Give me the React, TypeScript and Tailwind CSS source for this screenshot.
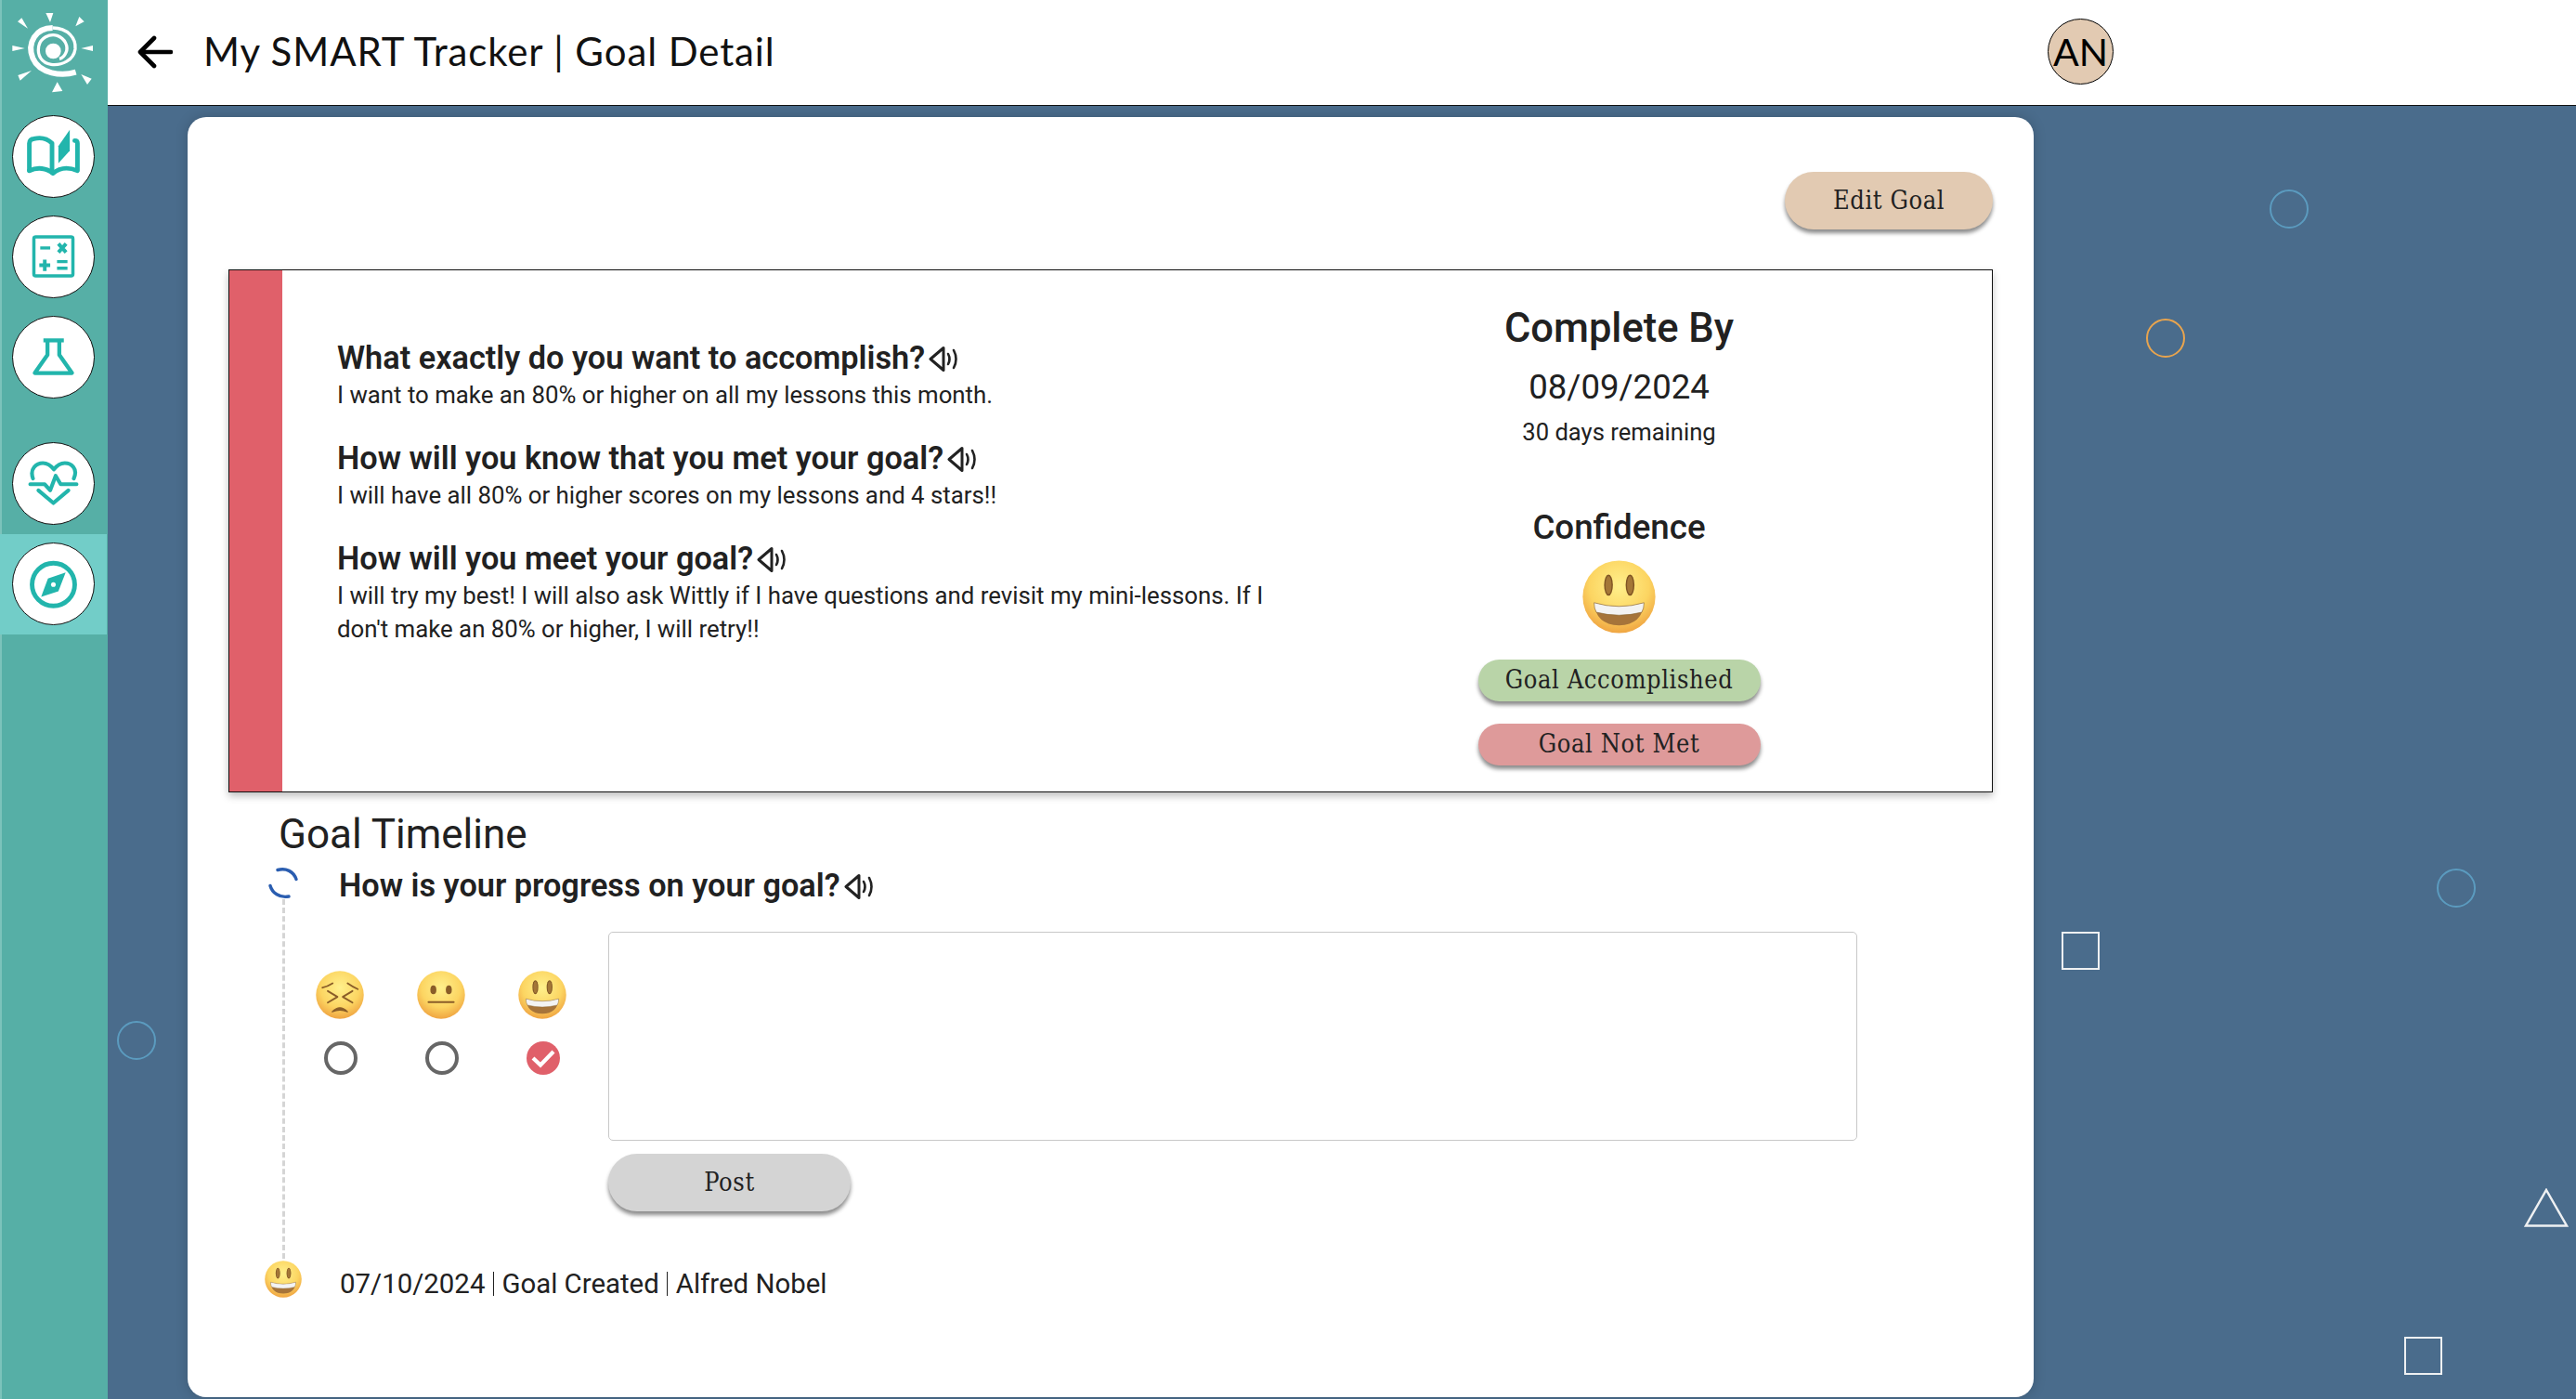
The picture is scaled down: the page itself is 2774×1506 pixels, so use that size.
import type { ReactNode } from 'react'

const teal = '#22b5ac'

function Logo() {
  return (
    <svg viewBox="0 0 348 339" className="h-[113px] w-[116px]">
      <g fill="#fff">
        <polygon points="148,42 172,42 162,72" />
        <polygon points="256,54 272,70 244,85" />
        <polygon points="300,147 300,165 262,156" />
        <polygon points="262,240 296,254 282,273" />
        <polygon points="185,265 168,298 202,294" />
        <polygon points="102,228 58,243 65,260" />
        <polygon points="40,147 40,165 80,156" />
        <polygon points="90,92 57,70 70,58" />
        <circle cx="172" cy="165" r="25" />
      </g>
      <path d="M245 233 C 200 246 128 240 106 188 C 86 138 116 90 170 90" fill="none" stroke="#fff" strokeWidth="18" />
      <path d="M170 90 C 220 90 246 125 243 158 C 238 195 200 212 165 208 C 135 204 120 180 125 150 C 130 122 160 108 185 115 C 210 124 222 150 213 170 C 208 182 200 188 192 190" fill="none" stroke="#fff" strokeWidth="10" />
    </svg>
  )
}

function BookIcon() {
  return (
    <svg viewBox="0 0 89 89" className="h-full w-full" fill="none" stroke={teal} strokeWidth="5" strokeLinejoin="round" strokeLinecap="round">
      <path d="M18 60 V30 C18 27 20 25 23 25 C31 23 38 25 43 30 V62" />
      <path d="M18 60 C27 56 37 57 44 63 C51 57 61 56 71 60 V30 C71 28 70 27 68 27" />
      <polygon points="50,33 62.5,15 62.5,38 50,52" fill={teal} stroke="none" />
    </svg>
  )
}

function CalcIcon() {
  return (
    <svg viewBox="0 0 89 89" className="h-full w-full" fill="none" stroke={teal} strokeWidth="3.4">
      <rect x="23" y="22.5" width="43" height="43" rx="2" strokeWidth="3.6" />
      <path d="M30 34.7 H41" />
      <path d="M50 30 L58.5 39.5 M58.5 30 L50 39.5" strokeWidth="4" />
      <path d="M29 53.7 H41 M35 47.5 V60" strokeWidth="4" />
      <path d="M48.5 49.7 H60 M48.5 57 H60" />
    </svg>
  )
}

function FlaskIcon() {
  return (
    <svg viewBox="0 0 89 89" className="h-full w-full" fill="none" stroke={teal} strokeWidth="4.4" strokeLinejoin="round">
      <path d="M33.5 26 H56" />
      <path d="M38 26 V42 L24 62 H65 L51 42 V26" />
    </svg>
  )
}

function HeartIcon() {
  return (
    <svg viewBox="0 0 89 89" className="h-full w-full" fill="none" stroke={teal} strokeWidth="4.2" strokeLinecap="round" strokeLinejoin="round">
      <path d="M22 39 C18 28 26 22 33 22 C38 22 42 25 45 29 C48 25 52 22 57 22 C64 22 72 28 67 39" />
      <path d="M19 45.3 H35 L41 52 L47 36 L52.5 45.3 H70" />
      <path d="M28 52 L44.5 66 L61 52" />
    </svg>
  )
}

function CompassIcon() {
  return (
    <svg viewBox="0 0 89 89" className="h-full w-full" fill="none">
      <circle cx="44.5" cy="45.3" r="23.5" stroke={teal} strokeWidth="5" />
      <polygon points="58,32 50,52.7 31,58.7 38.5,38.7" fill={teal} />
      <circle cx="44.5" cy="45.3" r="2.6" fill="#fff" />
    </svg>
  )
}

function NavButton({ children, active, className = '' }: { children: ReactNode; active?: boolean; className?: string }) {
  return (
    <div className={`flex h-[108px] w-[115px] items-center justify-center ${active ? 'bg-[#72cdc8]' : ''} ${className}`}>
      <div className="h-[89px] w-[89px] rounded-full border-[1.5px] border-[#111] bg-white">{children}</div>
    </div>
  )
}

function Speaker() {
  return (
    <svg viewBox="0 0 33 29" className="ml-[4px] h-[29px] w-[33px] shrink-0" fill="none" stroke="#222" strokeLinejoin="round" strokeLinecap="round">
      <path d="M2 14.5 L16 2.5 V26.5 Z" strokeWidth="3" />
      <path d="M21 9 Q24 14.5 21 20" strokeWidth="2.6" />
      <path d="M27 5 Q32 14.5 27 24" strokeWidth="2.6" />
    </svg>
  )
}

function FaceDefs({ id }: { id: string }) {
  return (
    <defs>
      <radialGradient id={id} cx="50%" cy="35%" r="68%">
        <stop offset="0%" stopColor="#fff08c" />
        <stop offset="60%" stopColor="#fcd562" />
        <stop offset="100%" stopColor="#ee9f3e" />
      </radialGradient>
    </defs>
  )
}

function SmileFace({ id, className }: { id: string; className: string }) {
  return (
    <svg viewBox="0 0 100 100" className={className}>
      <FaceDefs id={id} />
      <circle cx="50" cy="50" r="49.5" fill={`url(#${id})`} />
      <ellipse cx="35.6" cy="34" rx="6" ry="14.5" fill="#7f5423" />
      <ellipse cx="35.6" cy="34" rx="4.2" ry="12.5" fill="#a47637" />
      <ellipse cx="65" cy="34" rx="6" ry="14.5" fill="#7f5423" />
      <ellipse cx="65" cy="34" rx="4.2" ry="12.5" fill="#a47637" />
      <path d="M16 58 Q50 68 84 58 Q82 88 50 89 Q18 88 16 58 Z" fill="#a6743a" />
      <path d="M16 58 Q50 68 84 58 Q84 66 81 71 Q50 79 19 71 Q16 66 16 58 Z" fill="#f3f3f3" stroke="#8d6a3a" strokeWidth="0.8" />
    </svg>
  )
}

function NeutralFace({ id, className }: { id: string; className: string }) {
  return (
    <svg viewBox="0 0 100 100" className={className}>
      <FaceDefs id={id} />
      <circle cx="50" cy="50" r="49.5" fill={`url(#${id})`} />
      <ellipse cx="34" cy="39.5" rx="6.2" ry="9" fill="#8a5d28" />
      <ellipse cx="66" cy="39.5" rx="6.2" ry="9" fill="#8a5d28" />
      <path d="M24 65 H76" stroke="#8a5d28" strokeWidth="4" strokeLinecap="round" />
    </svg>
  )
}

function StrainFace({ id, className }: { id: string; className: string }) {
  return (
    <svg viewBox="0 0 100 100" className={className}>
      <FaceDefs id={id} />
      <circle cx="50" cy="50" r="49.5" fill={`url(#${id})`} />
      <g fill="none" stroke="#8a5d28" strokeWidth="3.6" strokeLinecap="round" strokeLinejoin="round">
        <path d="M14 35 Q24 33 35 26" />
        <path d="M66 26 Q76 33 87 38" />
        <path d="M25 42 L45 54 L25 66" />
        <path d="M76 42 L56 54 L76 66" />
      </g>
      <path d="M34 85 Q50 68 66 85 Q50 78 34 85 Z" fill="#8a5d28" stroke="#8a5d28" strokeWidth="2" strokeLinejoin="round" />
    </svg>
  )
}

function Question({ title, lines }: { title: string; lines: string[] }) {
  return (
    <div className="mb-[31px]">
      <div className="flex h-[40px] items-center whitespace-nowrap text-[34.3px] font-semibold text-[#212121]">
        {title}
        <Speaker />
      </div>
      <div className="mt-px whitespace-nowrap text-[25.8px] leading-[36px] text-[#212121]">
        {lines.map((line) => (
          <div key={line}>{line}</div>
        ))}
      </div>
    </div>
  )
}

const buttonFont = "font-['DejaVu_Serif_Condensed','DejaVu_Serif',serif]"

export default function App() {
  return (
    <div className="relative flex h-screen w-screen overflow-hidden bg-[#4a6c8c] font-['Roboto',sans-serif]">
      {/* Sidebar */}
      <aside className="h-full w-[116px] shrink-0 border-l-2 border-[#7cc3bb] bg-[#56afa6]">
        <div className="-ml-[2px]">
          <Logo />
        </div>
        <div className="-ml-[2px] mt-[1.5px]">
          <NavButton><BookIcon /></NavButton>
          <NavButton><CalcIcon /></NavButton>
          <NavButton><FlaskIcon /></NavButton>
          <NavButton className="mt-[28px]"><HeartIcon /></NavButton>
          <NavButton active><CompassIcon /></NavButton>
        </div>
      </aside>

      <div className="flex min-w-0 flex-1 flex-col">
        {/* Top bar */}
        <header className="flex h-[114px] shrink-0 items-center justify-between border-b border-[#111] bg-white pb-[2px] pl-[32px] pr-[498px]">
          <div className="flex items-center gap-[33px]">
            <svg viewBox="0 0 38 36" className="h-[36px] w-[38px]" fill="none" stroke="#000" strokeWidth="4.6" strokeLinecap="round" strokeLinejoin="round">
              <path d="M36 18 H4" />
              <path d="M18 3 L3 18 L18 33" />
            </svg>
            <h1 className="font-['Lato',sans-serif] text-[42px] font-normal tracking-[0.9px] text-[#111]">My SMART Tracker | Goal Detail</h1>
          </div>
          <div className="flex h-[71px] w-[71px] items-center justify-center rounded-full border border-black bg-[#e2cab2] font-['Lato',sans-serif] text-[41px] text-black">
            AN
          </div>
        </header>

        {/* Main */}
        <main className="flex-1 pl-[86px] pt-[12px]">
          <div className="h-[1378px] w-[1988px] rounded-[20px] bg-white px-[44px] pt-[59px] shadow-[0_0_14px_rgba(0,0,0,0.18)]">
            <div className="flex justify-end">
              <button className={`h-[62px] w-[224px] rounded-full bg-[#e2cab2] text-[27px] tracking-[0.6px] text-[#222] shadow-[0_4px_4px_rgba(0,0,0,0.45)] ${buttonFont}`}>
                Edit Goal
              </button>
            </div>

            {/* Goal summary */}
            <section className="mt-[43px] flex h-[563px] border border-[#111] shadow-[0_4px_8px_rgba(0,0,0,0.25)]">
              <div className="w-[57px] shrink-0 bg-[#e0606a]" />
              <div className="w-[1090px] shrink-0 pl-[59px] pt-[75px]">
                <Question title="What exactly do you want to accomplish?" lines={['I want to make an 80% or higher on all my lessons this month.']} />
                <Question title="How will you know that you met your goal?" lines={['I will have all 80% or higher scores on my lessons and 4 stars!!']} />
                <Question
                  title="How will you meet your goal?"
                  lines={[
                    'I will try my best! I will also ask Wittly if I have questions and revisit my mini-lessons. If I',
                    "don't make an 80% or higher, I will retry!!",
                  ]}
                />
              </div>
              <div className="flex flex-1 flex-col items-center pr-[52px] pt-[39px] text-[#212121]">
                <div className="whitespace-nowrap text-[43.5px] font-medium leading-[48px]">Complete By</div>
                <div className="mt-[17px] text-[36.6px] leading-[44px]">08/09/2024</div>
                <div className="mt-[10px] whitespace-nowrap text-[25.6px] leading-[32px]">30 days remaining</div>
                <div className="mt-[65px] text-[36.7px] font-medium leading-[44px]">Confidence</div>
                <SmileFace id="confidence-face" className="mt-[13px] h-[79px] w-[79px] shrink-0" />
                <button className={`mt-[28px] h-[45px] w-[304px] shrink-0 rounded-full bg-[#b9d4a8] text-[27px] tracking-[0.6px] text-[#222] shadow-[0_4px_4px_rgba(0,0,0,0.45)] ${buttonFont}`}>
                  Goal Accomplished
                </button>
                <button className={`mt-[24px] h-[45px] w-[304px] shrink-0 rounded-full bg-[#de9a9a] text-[27px] tracking-[0.6px] text-[#222] shadow-[0_4px_4px_rgba(0,0,0,0.45)] ${buttonFont}`}>
                  Goal Not Met
                </button>
              </div>
            </section>

            {/* Timeline */}
            <h2 className="ml-[54px] mt-[19px] text-[44px] font-normal leading-[52px] text-[#212121]">Goal Timeline</h2>
            <div className="ml-[39px] mt-[10px] flex">
              <div className="flex w-[40px] shrink-0 flex-col items-center pb-[5px]">
                <svg viewBox="0 0 32 34" className="h-[34px] w-[32px] shrink-0" fill="none" stroke="#2a5db0" strokeWidth="3.4" strokeLinecap="round">
                  <path d="M10 2.5 C19 0 27 4 30 12.5" />
                  <path d="M2 19.5 C4 27 12 33 22 31" />
                </svg>
                <div className="mb-[2px] w-0 flex-1 border-l-[3px] border-dashed border-[#d5d5d5]" />
                <SmileFace id="created-face" className="h-[40px] w-[40px] shrink-0" />
              </div>
              <div className="flex-1">
                <div className="flex h-[40px] items-center whitespace-nowrap pl-[40px] text-[34.3px] font-semibold text-[#212121]">
                  How is your progress on your goal?
                  <Speaker />
                </div>
                <div className="mt-[29px] flex pl-[15px]">
                  <div className="mt-[42px] grid h-fit grid-cols-3 gap-x-[57px] gap-y-[24px]">
                    <StrainFace id="face-low" className="h-[52px] w-[52px]" />
                    <NeutralFace id="face-mid" className="h-[52px] w-[52px]" />
                    <SmileFace id="face-high" className="h-[52px] w-[52px]" />
                    <div className="ml-[9px] h-[36px] w-[36px] rounded-full border-[4px] border-[#666]" />
                    <div className="ml-[9px] h-[36px] w-[36px] rounded-full border-[4px] border-[#666]" />
                    <div className="ml-[9px] flex h-[36px] w-[36px] items-center justify-center rounded-full bg-[#e0606a]">
                      <svg viewBox="0 0 36 36" className="h-[36px] w-[36px]" fill="none" stroke="#fff" strokeWidth="4.2">
                        <path d="M7 18 L15 25.5 L29 11" />
                      </svg>
                    </div>
                  </div>
                  <div className="ml-[45px]">
                    <textarea className="block h-[225px] w-[1345px] resize-none rounded-[5px] border border-[#c8c8c8] bg-white" />
                    <button className={`mt-[14px] block h-[62px] w-[261px] rounded-full bg-[#d4d4d4] text-[27px] tracking-[0.6px] text-[#222] shadow-[0_4px_4px_rgba(0,0,0,0.45)] ${buttonFont}`}>
                      Post
                    </button>
                  </div>
                </div>
                <div className="mt-[58px] flex h-[40px] items-center pl-[41px] text-[29.4px] text-[#212121]">
                  07/10/2024
                  <span className="mx-[8.5px] h-[26px] w-px bg-[#212121]" />
                  Goal Created
                  <span className="mx-[8.5px] h-[26px] w-px bg-[#212121]" />
                  Alfred Nobel
                </div>
              </div>
            </div>
          </div>
        </main>
      </div>

      {/* Background shapes */}
      <div className="absolute left-[2444px] top-[204px] h-[42px] w-[42px] rounded-full border-[2.5px] border-[#5b9bbf]" />
      <div className="absolute left-[2311px] top-[343px] h-[42px] w-[42px] rounded-full border-[2.5px] border-[#e8a44e]" />
      <div className="absolute left-[2624px] top-[935px] h-[42px] w-[42px] rounded-full border-[2.5px] border-[#5b9bbf]" />
      <div className="absolute left-[126px] top-[1099px] h-[42px] w-[42px] rounded-full border-[2.5px] border-[#5b9bbf]" />
      <div className="absolute left-[2220px] top-[1003px] h-[41px] w-[41px] border-[2.5px] border-[#eef0f2]" />
      <div className="absolute left-[2589px] top-[1439px] h-[41px] w-[41px] border-[2.5px] border-[#eef0f2]" />
      <svg viewBox="0 0 48 42" className="absolute left-[2718px] top-[1279px] h-[42px] w-[48px]" fill="none" stroke="#eef0f2" strokeWidth="2.5">
        <path d="M24 2 L46 40.5 H2 Z" />
      </svg>
    </div>
  )
}
